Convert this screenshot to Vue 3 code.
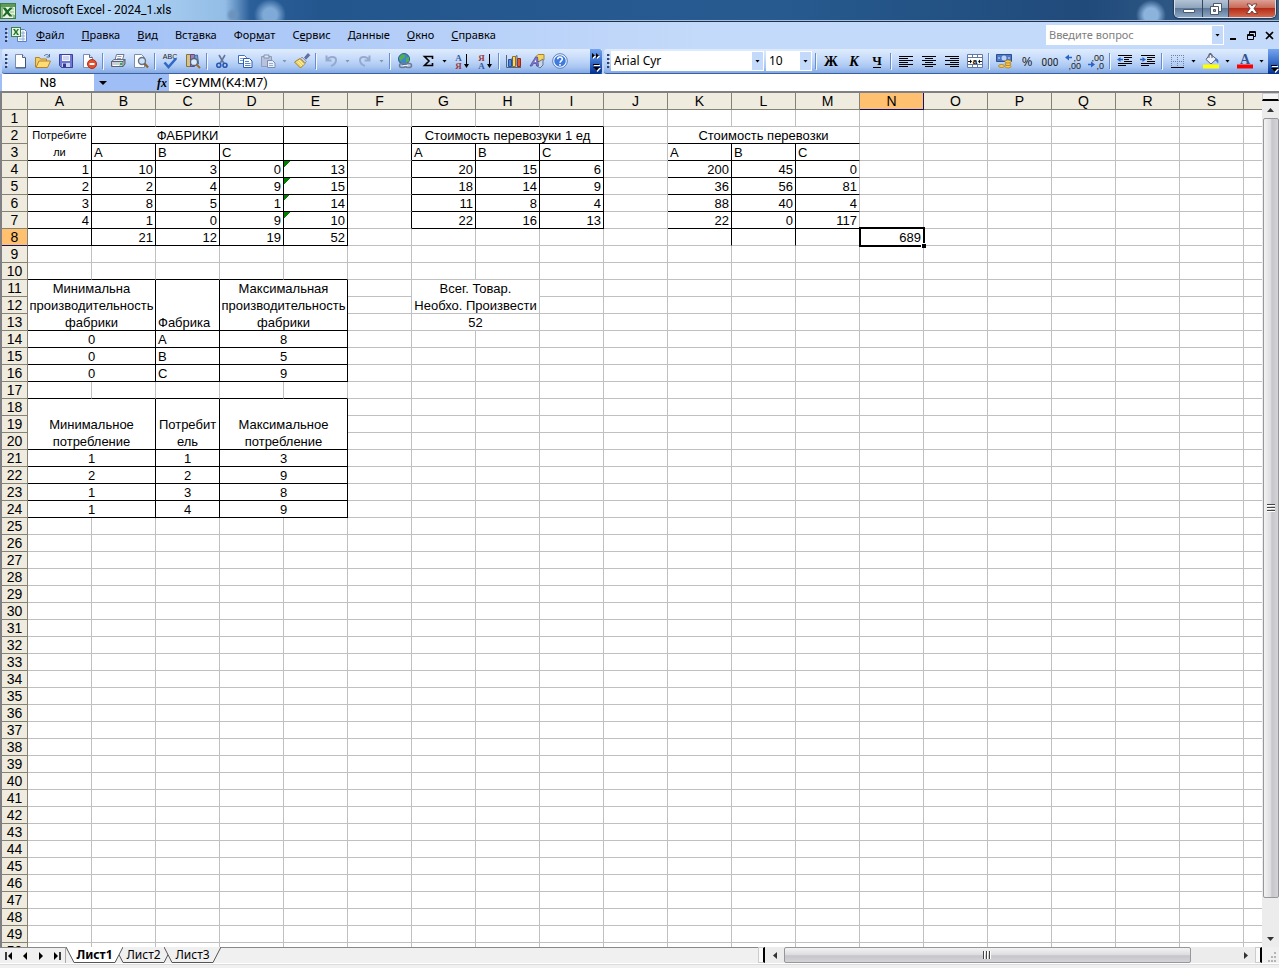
<script setup>
import { ref } from 'vue'

const menus = [
  ['', 'Ф', 'айл'], ['', 'П', 'равка'], ['', 'В', 'ид'], ['Вст', 'а', 'вка'], ['Фор', 'м', 'ат'],
  ['С', 'е', 'рвис'], ['', 'Д', 'анные'], ['', 'О', 'кно'], ['', 'С', 'правка'],
]

const icons = {
  excel: '<rect x=".5" y=".5" width="15" height="15" fill="#e8f3e4" stroke="#3f7d42"/><path d="M1 1h14v3H1z" fill="#5d9c58"/><path d="M1 4h2v11H1zM13 12h2v3h-2z" fill="#8dbb87"/><path d="M10 6h4M10 9h4M10 12h4" stroke="#8dbb87"/><path d="M2.500 4.500h3l2 2.500 2.500-2.500h3L8.700 9l3.800 4.500H9.500L7 10.800 4.500 13.500h-2.500L5.700 9z" fill="#1b6b26"/>',
  book: '<path d="M6.500 2.500h7l2 2v10h-9z" fill="#f5f8ff" stroke="#5e7fbd"/><path d="M8 6h6M8 9h6M8 12h6M12 4v10" stroke="#93acd8"/><rect x=".5" y=".5" width="9" height="9" fill="#e7f4e2" stroke="#3d853f"/><path d="M2 2h2l1 2 1.500-2H8L6 5l2 3H6L5 6 3.500 8H2l2-3z" fill="#1f7a2b"/>',
  blank: '<path d="M3.500 1.500h7l3 3v10h-10z" fill="#fff" stroke="#7b8eb0"/><path d="M10.500 1.500v3h3" fill="#dbe4f5" stroke="#52678f"/><path d="M13.500 5v10h-10" fill="none" stroke="#3c5078"/>',
  open: '<path d="M9 3c2-2 4-2 5 0m.500-2v3h-3" fill="none" stroke="#4a6a94"/><path d="M.500 14V4.500h4l1 1.500h6v2" fill="#f4cf65" stroke="#b5832a"/><path d="M1 14.500 4 8h11.500l-3 6.500z" fill="#ffdb78" stroke="#b5832a"/>',
  save: '<path d="M1.500 1.500h13v13h-11l-2-2z" fill="#6c78d2" stroke="#3b419a"/><path d="M4 2h8v6H4z" fill="#f2f4ff"/><path d="M5 4h6M5 6h6" stroke="#aab3dd"/><path d="M4 10h8v4H4z" fill="#cbd0ee"/><path d="M5 10.500h3V14H5z" fill="#32388c"/>',
  perm: '<path d="M2.500 1.500h6l3 3v10h-9z" fill="#fff" stroke="#7b8eb0"/><path d="M8.500 1.500v3h3" fill="#dbe4f5" stroke="#52678f"/><circle cx="11" cy="11" r="4.500" fill="#e2512f" stroke="#b62f16"/><path d="M8.500 10h5v2h-5z" fill="#fff"/>',
  print: '<path d="M5 7 6.500 1.500H14L12.500 7z" fill="#fff" stroke="#6b7890"/><path d="M7.500 3.500h4M7 5.500h4" stroke="#8fa0c0"/><path d="M1.500 8.500 4 6.500h11l-2 2z" fill="#e2e6ee" stroke="#697282"/><path d="M1.500 8.500H13v5H1.500z" fill="#c9cfda" stroke="#5b6372"/><path d="m13 8.500 2-2v4.500l-2 2.500" fill="#98a1b0" stroke="#5b6372"/><path d="M10 10h2v2h-2z" fill="#18c132"/><path d="M3 12.500h6" stroke="#fff"/>',
  preview: '<path d="M1.500 1.500h7l3 3v10h-10z" fill="#fff" stroke="#7b8eb0"/><circle cx="9" cy="8" r="3.500" fill="#cce4fa" stroke="#667287" stroke-width="1.400"/><path d="m11.500 10.500 3.500 4" stroke="#8a6434" stroke-width="2.200"/>',
  spell: '<text x="8" y="5.500" text-anchor="middle" font-family="Liberation Sans" font-size="7" fill="#222">ABC</text><path d="m2.500 9.500 4 4.500L14 5.500" fill="none" stroke="#3169c6" stroke-width="2.600"/>',
  research: '<path d="M1.500 1.500h4v12h-4z" fill="#d3c48f" stroke="#8a7435"/><path d="M5.500 1.500h4v12h-4z" fill="#9d7eb5" stroke="#644a7d"/><path d="m9.500 2.500 3-.500 1 9-3 .500z" fill="#6f9fd6" stroke="#456a9e"/><circle cx="9" cy="9" r="3.500" fill="#d9ecff" stroke="#5a6578" stroke-width="1.300"/><path d="m11.500 11.500 3.500 3.500" stroke="#9b6d31" stroke-width="2"/>',
  cut: '<path d="m5 2 5 8.500M11 2 6 10.500" stroke="#64779a" stroke-width="1.600"/><circle cx="4.800" cy="12.300" r="2" fill="none" stroke="#2858b5" stroke-width="1.600"/><circle cx="11" cy="12.300" r="2" fill="none" stroke="#2858b5" stroke-width="1.600"/>',
  copy: '<path d="M1.500 2.500h6l2 2v6h-8z" fill="#fff" stroke="#3f6fc0"/><path d="M3 5.500h5M3 7.500h5" stroke="#7ca0df"/><path d="M6.500 5.500h6l2.500 2.500v6.500H6.500z" fill="#fff" stroke="#2d5cae"/><path d="M8 8.500h4M8 10.500h5.500M8 12.500h5.500" stroke="#5585d2"/>',
  paste: '<path d="M1.500 3.500h10v10h-10z" fill="#b7c3dc" stroke="#8d9cba"/><path d="M4 2h5v3H4z" fill="#dfe6f3" stroke="#8492ad"/><path d="M7.500 7.500h5l2.500 2.500v4.500H7.500z" fill="#e9effa" stroke="#7d8eb0"/><path d="M9 10.500h4M9 12.500h4" stroke="#9daccd"/>',
  painter: '<path d="m10.500 4.500 3.500-4 1.800 1.800-3.800 4z" fill="#6171a7" stroke="#3b4b7c" stroke-width=".6"/><path d="m8 4 4.500 4.500-1.500 1.500L6.500 5.500z" fill="#c7cedc" stroke="#6f7688" stroke-width=".6"/><path d="m6 5.500 5 5-4.500 4.500L.500 9z" fill="#f0d769" stroke="#a58131"/><path d="m3.500 8.500 4.500 4.500M5 7l4.500 4.500" stroke="#fff3ab"/>',
  undo: '<path d="M3.500 2.500v5h5M4 7c2-4 9-4 9 0 0 3-2 5-5 6" fill="none" stroke="#96a9cf" stroke-width="2"/>',
  redo: '<path d="M12.500 2.500v5h-5M12 7c-2-4-9-4-9 0 0 3 2 5 5 6" fill="none" stroke="#96a9cf" stroke-width="2"/>',
  link: '<circle cx="7" cy="6" r="5.500" fill="#3e84d0" stroke="#2b5c90"/><path d="M4 2c3-2 5 0 4 2s-3 1-3 3-3 0-3-2zM9 5l3-1v4l-3 2z" fill="#50b04b"/><rect x="2.500" y="10.500" width="6" height="4" rx="2" fill="none" stroke="#707b8e" stroke-width="1.500"/><rect x="8.500" y="10.500" width="6" height="4" rx="2" fill="none" stroke="#707b8e" stroke-width="1.500"/><path d="M6 12.500h5" stroke="#eef"/>',
  sum: '<path d="M12.500 6V3.500H4.500L9 8l-4.500 4.500h8V10" fill="none" stroke="#000" stroke-width="1.600"/>',
  sortUp: '<text x="4.500" y="7.500" text-anchor="middle" font-family="Liberation Serif" font-size="9" font-weight="bold" fill="#315a9e">А</text><text x="4.500" y="15.500" text-anchor="middle" font-family="Liberation Serif" font-size="9" font-weight="bold" fill="#9e3b3b">Я</text><path d="M12.500 1v12" stroke="#000"/><path d="M10 11h5l-2.500 4z"/>',
  sortDown: '<text x="4.500" y="7.500" text-anchor="middle" font-family="Liberation Serif" font-size="9" font-weight="bold" fill="#9e3b3b">Я</text><text x="4.500" y="15.500" text-anchor="middle" font-family="Liberation Serif" font-size="9" font-weight="bold" fill="#315a9e">А</text><path d="M12.500 1v12" stroke="#000"/><path d="M10 11h5l-2.500 4z"/>',
  chart: '<path d="M.500 2v12.500H15" fill="none" stroke="#54637e"/><path d="M2.500 6.500h3v7h-3z" fill="#4b86df" stroke="#23519b"/><path d="M6.500 3.500h3v10h-3z" fill="#ffd75c" stroke="#9a7410"/><path d="M11.500 5.500h3v8h-3z" fill="#e2542f" stroke="#94290d"/><path d="m5.500 6.500 1-2v9m3-10 1.500-1v10" fill="none" stroke="#58627a"/>',
  draw: '<path d="M7 3.500 9 1.500h6v5l-2 2H7z" fill="#f3d362" stroke="#a98431"/><path d="m11 8 3-2v6l-3 3-3-2v-4z" fill="#c8d4e8" stroke="#64748f"/><path d="M1 13 6.500 4h2l1 9h-2l-.3-2.500H4.500L3 13z" fill="#7e78cb" stroke="#4a4590" stroke-width=".7"/><path d="m5.500 9 1.300-2.500.2 2.500z" fill="#fff"/>',
  help: '<circle cx="8" cy="8" r="6.500" fill="#3d7be0" stroke="#f3f8ff" stroke-width="1.500"/><circle cx="8" cy="8" r="7.300" fill="none" stroke="#3d66ac" stroke-width=".8"/><path d="M5.700 6.300c0-3 4.600-3 4.600 0 0 1.500-2.300 1.700-2.300 3.400M8 11v1.800" fill="none" stroke="#fff" stroke-width="1.600"/>',
  bold: '<text x="8" y="13" text-anchor="middle" font-family="Liberation Serif" font-size="14" font-weight="bold">Ж</text>',
  italic: '<text x="8" y="13" text-anchor="middle" font-family="Liberation Serif" font-size="14" font-weight="bold" font-style="italic">К</text>',
  under: '<text x="8" y="12" text-anchor="middle" font-family="Liberation Serif" font-size="13" font-weight="bold">Ч</text><path d="M4 14.500h8" stroke="#000"/>',
  left: '<path d="M1 3.500h14M1 5.500h9M1 7.500h14M1 9.500h9M1 11.500h14M1 13.500h9" stroke="#000"/>',
  center: '<path d="M1 3.500h14M4 5.500h8M1 7.500h14M4 9.500h8M1 11.500h14M4 13.500h8" stroke="#000"/>',
  right: '<path d="M1 3.500h14M6 5.500h9M1 7.500h14M6 9.500h9M1 11.500h14M6 13.500h9" stroke="#000"/>',
  merge: '<path d="M.500 1.500h15v13H.500zM.500 4.500h15M.500 11.500h15M5.500 1.500v3m5-3v3m-5 7v3m5-3v3" fill="#fff" stroke="#6379a2"/><path d="M1 5h14v6H1z" fill="#fff"/><path d="M1 8.500h3M12 8.500h3" stroke="#222"/><path d="m3 6.500 2 2-2 2zM13 6.500l-2 2 2 2z"/><text x="8" y="11" text-anchor="middle" font-family="Liberation Sans" font-size="8" font-weight="bold">a</text>',
  money: '<path d="M.500 1.500h15v7H.500z" fill="#4c78c5" stroke="#2b4f92"/><circle cx="8" cy="5" r="2.500" fill="#bcd2f4"/><path d="M2 5h2m8 0h2" stroke="#d8e5fa"/><g fill="#f8c952" stroke="#a5741a" stroke-width=".7"><ellipse cx="12" cy="13.500" rx="3" ry="1.500"/><ellipse cx="12" cy="11" rx="3" ry="1.500"/><ellipse cx="12" cy="8.500" rx="3" ry="1.500"/><ellipse cx="5.500" cy="13" rx="3" ry="1.500"/></g>',
  percent: '<text x="8" y="13" text-anchor="middle" font-family="Open Sans" font-size="13" fill="#222">%</text>',
  zeros: '<text x="8" y="13" text-anchor="middle" font-family="Roboto" font-size="10" fill="#222">000</text>',
  decMore: '<path d="M7 4.500H2" stroke="#2965c7" stroke-width="1.500"/><path d="M4 1.500v6l-4-3z" fill="#2965c7"/><text x="16" y="8" text-anchor="end" font-family="Liberation Sans" font-size="9" fill="#222">,0</text><text x="16" y="15.500" text-anchor="end" font-family="Liberation Sans" font-size="9" fill="#222">,00</text>',
  decLess: '<path d="M0 11.500h5" stroke="#2965c7" stroke-width="1.500"/><path d="M3 8.500v6l4-3z" fill="#2965c7"/><text x="16" y="8" text-anchor="end" font-family="Liberation Sans" font-size="9" fill="#222">,00</text><text x="16" y="15.500" text-anchor="end" font-family="Liberation Sans" font-size="9" fill="#222">,0</text>',
  outdent: '<path d="M1 2.500h14M7 4.500h8M7 6.500h5M7 8.500h8M1 10.500h14M1 12.500h8" stroke="#000"/><path d="M6 6.500H2" stroke="#2965c7" stroke-width="1.500"/><path d="M3.500 4v5L0 6.500z" fill="#2965c7"/>',
  indent: '<path d="M1 2.500h14M7 4.500h8M7 6.500h5M7 8.500h8M1 10.500h14M1 12.500h8" stroke="#000"/><path d="M0 6.500h4" stroke="#2965c7" stroke-width="1.500"/><path d="M2.500 4v5L6 6.500z" fill="#2965c7"/>',
  border: '<path d="M2 2.500h13M2 8.500h13M2.500 2v12M8.500 2v12M14.500 2v12" stroke="#6f82a6" stroke-dasharray="1 1"/><path d="M2 14.500h13" stroke="#000"/>',
  fill: '<path d="m7 1 6.500 5-5.500 5-5-4.500z" fill="#eef2f8" stroke="#535f75"/><path d="M6 5V1.500C6 0 9 0 9 2v3" fill="none" stroke="#535f75"/><path d="M12.500 5.500c4 .500 3 4 2.500 5-1-1-1.500-3-3.500-3z" fill="#4479cc"/><path d="M0 11.500h16v4H0z" fill="#ff0"/>',
  fontColor: '<text x="8" y="11" text-anchor="middle" font-family="Liberation Serif" font-size="14" font-weight="bold" fill="#35548e">А</text><path d="M0 11.500h16v4H0z" fill="red"/>',
}

const standardBar = [
  ['blank', 'Создать'], ['open', 'Открыть'], ['save', 'Сохранить'], ['perm', 'Разрешения'], '|',
  ['print', 'Печать'], ['preview', 'Просмотр'], '|', ['spell', 'Орфография'], ['research', 'Справочные материалы'], '|',
  ['cut', 'Вырезать'], ['copy', 'Копировать'], ['paste', 'Вставить'], 'off', ['painter', 'Формат по образцу'], '|',
  ['undo', 'Отменить'], 'off', ['redo', 'Вернуть'], 'off', '|', ['link', 'Гиперссылка'], ['sum', 'Автосумма'], 'v',
  ['sortUp', 'По возрастанию'], ['sortDown', 'По убыванию'], '|', ['chart', 'Диаграмма'], ['draw', 'Рисование'], ['help', 'Справка'],
]
const formatBar = [
  '|', ['bold', 'Полужирный'], ['italic', 'Курсив'], ['under', 'Подчеркнутый'], '|',
  ['left', 'По левому краю'], ['center', 'По центру'], ['right', 'По правому краю'], ['merge', 'Объединить'], '|',
  ['money', 'Денежный формат'], ['percent', 'Процентный формат'], ['zeros', 'Разделители'], ['decMore', 'Увеличить разрядность'], ['decLess', 'Уменьшить разрядность'], '|',
  ['outdent', 'Уменьшить отступ'], ['indent', 'Увеличить отступ'], '|',
  ['border', 'Границы'], 'v', ['fill', 'Цвет заливки'], 'v', ['fontColor', 'Цвет шрифта'], 'v',
]

// The last column has no letter: only its left part fits in the pane.
const columns = [...'ABCDEFGHIJKLMNOPQRS', '']
const rowCount = 50
const cells = {}
const put = (ref, text, opts = {}) => { cells[ref] = { text, ...opts } }
const putRow = (col, row, values, opts = {}) => {
  const start = columns.indexOf(col)
  values.forEach((v, i) => put(columns[start + i] + row, v, { align: typeof v === 'number' ? 'right' : 'left', ...opts }))
}

put('A2', 'Потребите\nли', { rows: 2, align: 'center', small: true })
put('B2', 'ФАБРИКИ', { cols: 3, align: 'center' })
putRow('B', 3, ['A', 'B', 'C'])
putRow('A', 4, [1, 10, 3, 0, 13])
putRow('A', 5, [2, 2, 4, 9, 15])
putRow('A', 6, [3, 8, 5, 1, 14])
putRow('A', 7, [4, 1, 0, 9, 10])
putRow('B', 8, [21, 12, 19, 52])
for (const r of [4, 5, 6, 7]) cells['E' + r].flag = true

put('G2', 'Стоимость перевозуки 1 ед', { cols: 3, align: 'center' })
putRow('G', 3, ['A', 'B', 'C'])
putRow('G', 4, [20, 15, 6])
putRow('G', 5, [18, 14, 9])
putRow('G', 6, [11, 8, 4])
putRow('G', 7, [22, 16, 13])

put('K2', 'Стоимость перевозки', { cols: 3, align: 'center' })
putRow('K', 3, ['A', 'B', 'C'])
putRow('K', 4, [200, 45, 0])
putRow('K', 5, [36, 56, 81])
putRow('K', 6, [88, 40, 4])
putRow('K', 7, [22, 0, 117])
put('N8', 689, { align: 'right', active: true })

put('G11', 'Всег. Товар.\nНеобхо. Произвести', { cols: 2, rows: 2, align: 'center' })
put('G13', 52, { cols: 2, align: 'center' })

const wide = { cols: 2, align: 'center' }
put('A11', 'Минимальна\nпроизводительность\nфабрики', { ...wide, rows: 3 })
put('C11', 'Фабрика', { rows: 3, align: 'left' })
put('D11', 'Максимальная\nпроизводительность\nфабрики', { ...wide, rows: 3 })
;[[14, 0, 'A', 8], [15, 0, 'B', 5], [16, 0, 'C', 9]].forEach(([r, a, c, d]) => {
  put('A' + r, a, wide); put('C' + r, c, { align: 'left' }); put('D' + r, d, wide)
})
put('A18', 'Минимальное\nпотребление', { ...wide, rows: 3 })
put('C18', 'Потребит\nель', { rows: 3, align: 'center' })
put('D18', 'Максимальное\nпотребление', { ...wide, rows: 3 })
;[[21, 1, 1, 3], [22, 2, 2, 9], [23, 1, 3, 8], [24, 1, 4, 9]].forEach(([r, a, c, d]) => {
  put('A' + r, a, wide); put('C' + r, c, { align: 'center' }); put('D' + r, d, wide)
})

// Black rules: [columns, first row, last row]
const bottomRules = [['ABCDEGHI', 1, 1], ['BCDEGHIKLM', 2, 2], ['ABCDEGHIKLM', 3, 7], ['ABCDE', 8, 8],
  ['ABCDE', 10, 10], ['ABCDE', 13, 17], ['ABCDE', 20, 24]]
const rightRules = [['ADE', 2, 8], ['BC', 3, 8], ['FI', 2, 7], ['GH', 3, 7], ['KL', 3, 8], ['BCE', 11, 16], ['BCE', 18, 24]]
const ruled = (rules, col, row) => col !== '' && rules.some(([c, a, b]) => c.includes(col) && row >= a && row <= b)

const covered = new Set()
const grid = []
for (let r = 1; r <= rowCount; r++) {
  const line = []
  columns.forEach((col, c) => {
    if (covered.has(col + r)) return
    const cell = cells[col + r] || { text: '' }
    const cols = cell.cols || 1
    const rows = cell.rows || 1
    for (let y = 0; y < rows; y++) for (let x = 0; x < cols; x++) covered.add(columns[c + x] + (r + y))
    line.push({
      ...cell, cols, rows, key: col + r,
      classes: [cell.align, {
        small: cell.small, flag: cell.flag, active: cell.active,
        'line-b': ruled(bottomRules, col, r + rows - 1),
        'line-r': ruled(rightRules, columns[c + cols - 1], r),
      }],
    })
  })
  grid.push(line)
}

const tabs = ['Лист1', 'Лист2', 'Лист3']
const activeTab = ref('Лист1')
const nameBox = ref('N8')
const formula = ref('=СУММ(K4:M7)')
const question = ref('')
</script>

<template>
  <div class="window">
    <header class="title">
      <svg class="ico" viewBox="0 0 16 16" v-html="icons.excel"></svg>
      <h1>Microsoft Excel - 2024_1.xls</h1>
      <div class="caption">
        <button aria-label="Свернуть"><svg width="14" height="12" viewBox="0 0 14 12"><path d="M1.500 6.500h11v3h-11z" fill="#fff" stroke="#4b5a6c" /></svg></button>
        <button aria-label="Восстановить"><svg width="14" height="12" viewBox="0 0 14 12"><path d="M4.500.500h8v8h-8z" fill="#fff" stroke="#4b5a6c" /><path d="M1.500 3.500h8v8h-8z" fill="#fff" stroke="#4b5a6c" /><path d="M4.500 6.500h2v2h-2z" fill="#8fa4bb" stroke="#4b5a6c" /></svg></button>
        <button class="close" aria-label="Закрыть"><svg width="14" height="12" viewBox="0 0 14 12"><path d="M2 1h3.500L7 3l1.500-2H12L9 5.500l3.500 5H9L7 8l-2 2.500H1.500L5 5.500z" fill="#fff" stroke="#5e2c2c" stroke-width=".8" /></svg></button>
      </div>
    </header>

    <nav class="menu">
      <i class="grip"></i>
      <svg class="ico" viewBox="0 0 16 16" v-html="icons.book"></svg>
      <button v-for="(m, i) in menus" :key="i">{{ m[0] }}<u>{{ m[1] }}</u>{{ m[2] }}</button>
      <div class="ask">
        <input v-model="question" aria-label="Введите вопрос" placeholder="Введите вопрос">
        <button class="drop" aria-label="Список вопросов"><i class="tri"></i></button>
      </div>
      <div class="doc-buttons">
        <button aria-label="Свернуть книгу"><svg width="9" height="9" viewBox="0 0 9 9"><path d="M1 7h6v2H1z" /></svg></button>
        <button aria-label="Восстановить книгу"><svg width="9" height="9" viewBox="0 0 9 9"><path d="M2.500 5V.500h6v5H7M2 1.500h7M.500 3.500h6v5h-6zM0 4.500h7" fill="none" stroke="#000" /></svg></button>
        <button aria-label="Закрыть книгу"><svg width="9" height="9" viewBox="0 0 9 9"><path d="m1 1 7 7M8 1 1 8" stroke="#000" stroke-width="1.700" /></svg></button>
      </div>
    </nav>

    <div class="bars">
      <div class="bar">
        <i class="grip"></i>
        <template v-for="(b, i) in standardBar" :key="i">
          <i v-if="b === '|'" class="sep"></i>
          <button v-else-if="b === 'v' || b === 'off'" class="more" :class="b" aria-label="Список"><i class="tri"></i></button>
          <button v-else class="tool" :aria-label="b[1]"><svg class="ico" viewBox="0 0 16 16" v-html="icons[b[0]]"></svg></button>
        </template>
        <button class="chevron first" aria-label="Параметры панели">
          <svg width="11" height="25" viewBox="0 0 11 25"><path d="m2 5 3 2.500L2 10zM6 5l3 2.500L6 10z" fill="#fff" /><path d="m1 4 3 2.500L1 9zM5 4l3 2.500L5 9z" /><path d="M3 16.500h6" stroke="#fff" /><path d="M3 19h7l-3.500 4z" fill="#fff" /><path d="M2 15.500h6" stroke="#000" /><path d="M2 18h7l-3.500 4z" /></svg>
        </button>
      </div>
      <div class="bar grow">
        <i class="grip"></i>
        <span class="combo font"><select aria-label="Шрифт"><option>Arial Cyr</option></select><b class="drop"><i class="tri"></i></b></span>
        <span class="combo size"><select aria-label="Размер"><option>10</option></select><b class="drop"><i class="tri"></i></b></span>
        <template v-for="(b, i) in formatBar" :key="i">
          <i v-if="b === '|'" class="sep"></i>
          <button v-else-if="b === 'v'" class="more" aria-label="Список"><i class="tri"></i></button>
          <button v-else class="tool" :aria-label="b[1]"><svg class="ico" viewBox="0 0 16 16" v-html="icons[b[0]]"></svg></button>
        </template>
        <button class="chevron last" aria-label="Параметры панели">
          <svg width="11" height="25" viewBox="0 0 11 25"><path d="M4 17.500h6" stroke="#fff" /><path d="M4 20h7l-3.500 4z" fill="#fff" /><path d="M3 16.500h6" stroke="#000" /><path d="M3 19h7l-3.500 4z" /></svg>
        </button>
      </div>
    </div>

    <div class="formula">
      <input v-model="nameBox" class="name" aria-label="Имя">
      <button class="name-drop" aria-label="Список имен"><svg width="8" height="4" viewBox="0 0 8 4"><path d="M0 0h8L4 4z" /></svg></button>
      <button class="fx" aria-label="Вставка функции">fx</button>
      <input v-model="formula" class="expr" aria-label="Строка формул">
    </div>

    <main class="work">
      <div class="sheet">
        <table>
          <colgroup><col class="c-head"><col v-for="c in columns" :key="c" class="c-cell"></colgroup>
          <thead>
            <tr><th></th><th v-for="c in columns" :key="c" scope="col" :class="{ on: c === 'N' }">{{ c }}</th></tr>
          </thead>
          <tbody>
            <tr v-for="(line, r) in grid" :key="r">
              <th scope="row" :class="{ on: r === 7 }">{{ r + 1 }}</th>
              <td v-for="c in line" :key="c.key" :colspan="c.cols" :rowspan="c.rows" :class="c.classes"><div>{{ c.text }}</div></td>
            </tr>
          </tbody>
        </table>
      </div>
      <div class="vscroll">
        <i class="split-h"></i>
        <button aria-label="Вверх"><svg width="7" height="4" viewBox="0 0 7 4"><path d="M0 4h7L3.500 0z" fill="#333" /></svg></button>
        <div class="track"><div class="thumb"><svg width="8" height="8" viewBox="0 0 8 8"><path d="M0 .500h8M0 3.500h8M0 6.500h8" stroke="#444" /><path d="M0 1.500h8M0 4.500h8M0 7.500h8" stroke="#fff" /></svg></div></div>
        <button aria-label="Вниз"><svg width="7" height="4" viewBox="0 0 7 4"><path d="M0 0h7L3.500 4z" fill="#333" /></svg></button>
      </div>
    </main>

    <footer class="bottom">
      <div class="tab-nav">
        <button aria-label="Первый лист"><svg width="8" height="8" viewBox="0 0 8 8"><path d="M1 0v8" stroke="#000" stroke-width="1.500" /><path d="M7 0v8L3 4z" /></svg></button>
        <button aria-label="Предыдущий лист"><svg width="8" height="8" viewBox="0 0 8 8"><path d="M6 0v8L2 4z" /></svg></button>
        <button aria-label="Следующий лист"><svg width="8" height="8" viewBox="0 0 8 8"><path d="M2 0v8l4-4z" /></svg></button>
        <button aria-label="Последний лист"><svg width="8" height="8" viewBox="0 0 8 8"><path d="M7 0v8" stroke="#000" stroke-width="1.500" /><path d="M1 0v8l4-4z" /></svg></button>
      </div>
      <div class="tabs">
        <button v-for="t in tabs" :key="t" :class="{ current: t === activeTab }" @click="activeTab = t">
          <svg viewBox="0 0 57 16" preserveAspectRatio="none"><path d="M0 0l8 15.500h41L57 0" stroke="#555" vector-effect="non-scaling-stroke" /></svg>
          <span>{{ t }}</span>
        </button>
      </div>
      <i class="split-v"></i>
      <div class="hscroll">
        <button aria-label="Влево"><svg width="4" height="7" viewBox="0 0 4 7"><path d="M4 0v7L0 3.500z" fill="#333" /></svg></button>
        <div class="track"><div class="thumb"><svg width="8" height="8" viewBox="0 0 8 8"><path d="M.500 0v8M3.500 0v8M6.500 0v8" stroke="#444" /><path d="M1.500 0v8M4.500 0v8M7.500 0v8" stroke="#fff" /></svg></div></div>
        <button aria-label="Вправо"><svg width="4" height="7" viewBox="0 0 4 7"><path d="M0 0v7l4-3.500z" fill="#333" /></svg></button>
      </div>
      <i class="split-v"></i>
      <svg class="resize" width="17" height="16" viewBox="0 0 17 16"><path d="M12 5h2v2h-2zM9 9h2v2H9zM12 9h2v2h-2zM6 13h2v2H6zM9 13h2v2H9zM12 13h2v2h-2z" fill="#b5b5b5" /></svg>
    </footer>
    <div class="status"></div>
  </div>
</template>

<style>
body { margin: 0; overflow: hidden; }
</style>

<style scoped>
.window { display: flex; flex-direction: column; height: 100vh; font: 12px/16px "Noto Sans", "Open Sans", sans-serif; color: #000; background: #f0f0f0; overflow: hidden; }
button { border: 0; padding: 0; margin: 0; background: none; font: inherit; color: inherit; display: flex; align-items: center; justify-content: center; flex: none; }
input, select { border: 0; margin: 0; padding: 0; background: #fff; font: inherit; color: inherit; outline: 0; border-radius: 0; min-width: 0; box-sizing: border-box; }
svg { flex: none; display: block; }
.ico { width: 16px; height: 16px; overflow: visible; }
.tri { width: 5px; height: 3px; background: #000; clip-path: polygon(0 0, 100% 0, 50% 100%); }

.title { display: flex; align-items: center; height: 20px; flex: none; gap: 6px; border-bottom: 1px solid #a8bdd6; box-shadow: 0 1px #1c3050; position: relative; margin-bottom: 1px;
  background: radial-gradient(circle at 270px 15px, #7fa9d6 0 7px, transparent 16px), radial-gradient(circle at 1151px 15px, #8cb3dc 0 7px, transparent 15px), radial-gradient(circle at 233px 15px, #6c93bd 0 3px, transparent 7px), linear-gradient(90deg, #a3c8ee 0, #b4d6f6 110px, #93bde6 225px, #2b5f99 250px, #24568e 320px, #275b90 60%, #204a7a 85%, #3f6792 100%); }
.title .ico { margin-top: 1px; }
.title h1 { margin: 0; font: 12px/20px Roboto, "Noto Sans", sans-serif; white-space: nowrap; }
.caption { display: flex; margin-left: auto; margin-right: 3px; align-self: flex-start; border: 1px solid #d4e0ee; border-top: 0; border-radius: 0 0 5px 5px; overflow: hidden; box-shadow: 0 0 1px 1px #26384f; }
.caption button { width: 28px; height: 17px; background: linear-gradient(#b3c3d5, #8fa5bd 45%, #5e7898 50%, #8ba6c3); border-right: 1px solid #34465e; }
.caption button + button { width: 26px; }
.caption button.close { width: 46px; background: linear-gradient(#dba196, #ca6a58 45%, #b32d18 50%, #d4674a); border: 0; }

.menu { display: flex; align-items: center; height: 26px; padding-bottom: 1px; flex: none; padding-left: 5px; background: linear-gradient(90deg, #9ebef5, #c4dafa 55%); font-size: 11px; }
.menu .ico { margin: 0 9px 0 3px; }
.menu > button { padding: 0 8px; margin-right: 1px; display: block; white-space: pre; }
.menu > .ico + button { padding-left: 0; }
.grip { width: 3px; height: 14px; flex: none; background: repeating-linear-gradient(#27417a 0 2px, transparent 2px 4px); border-right: 1px solid #fff8; box-sizing: border-box; }
.ask { display: flex; width: 178px; height: 20px; margin-left: auto; background: #fff; padding: 1px; box-sizing: border-box; }
.ask input { flex: 1; padding-left: 2px; }
.ask input::placeholder { color: #808080; opacity: 1; }
.drop { width: 11px; background: #c4dafa; display: flex; align-items: center; justify-content: center; }
.doc-buttons { display: flex; gap: 9px; margin: 0 5px 0 5px; }

.bars { display: flex; gap: 2px; height: 25px; flex: none; background: #bed4f8; padding-left: 2px; }
.bar { display: flex; align-items: center; background: linear-gradient(#dfecfd, #c6dbfa 40%, #a9c6f2 75%, #83a9e4); border-bottom: 1px solid #3b619c; border-radius: 3px 0 0 3px; padding-left: 3px; box-sizing: border-box; height: 25px; }
.bar.grow { flex: 1; min-width: 0; }
.tool { width: 23px; height: 23px; }
.more { width: 11px; height: 23px; }
.off .tri { background: #8895ae; }
.sep { width: 1px; height: 16px; margin: 0 3px 0 2px; background: #6a8ccb; box-shadow: 1px 1px #f1f9ff; flex: none; }
.chevron { width: 12px; height: 25px; align-self: flex-start; background: linear-gradient(#75a5f0, #3b6fc9 50%, #00308f); border-radius: 0 3px 3px 0; }
.first { margin-left: 19px; }
.last { margin-left: auto; width: 11px; border-radius: 0; }
.combo { display: flex; background: #fff; height: 20px; padding: 1px; box-sizing: border-box; margin-right: 2px; flex: none; }
.grip + .combo { margin-left: 1px; }
.combo select { appearance: none; flex: 1; padding-left: 2px; }
.combo.font { width: 153px; }
.combo.size { width: 46px; margin-right: 1px; }

.formula { display: flex; align-items: center; height: 17px; flex: none; background: #9ebef5; }
.formula input { height: 17px; font-family: Roboto, "Liberation Sans", sans-serif; font-size: 13px; }
.name { width: 92px; margin-left: 2px; text-align: center; }
.name-drop { width: 18px; }
.fx { width: 57px; padding-right: 2px; justify-content: flex-end; font: italic bold 12px/16px "Liberation Serif", serif; }
.expr { flex: 1; padding-left: 6px; }

.work { flex: 1; min-height: 0; display: flex; border-top: 2px solid #808084; }
.sheet { flex: 1; min-width: 0; overflow: hidden; border-left: 2px solid #808084; background: #fff; }
table { border-collapse: separate; border-spacing: 0; table-layout: fixed; width: 1306px; font: 13px/17px "Liberation Sans", Arial, sans-serif; }
.c-head { width: 26px; }
.c-cell { width: 64px; }
tr { height: 17px; }
th, td { box-sizing: border-box; height: 17px; padding: 0; border-right: 1px solid #c0c0c0; border-bottom: 1px solid #c0c0c0; white-space: pre; vertical-align: bottom; }
th { background: #efebde; border-color: #848273; font-weight: 400; font-size: 14px; line-height: 16px; text-align: center; }
th.on { background: #ffc06f; border-color: #10107a; }
tbody th.on { border-right-color: #848273; }
td { padding: 0 2px; }
td div { margin-bottom: -1px; line-height: 17px; }
.left { text-align: left; }
.right { text-align: right; }
.center { text-align: center; padding: 0; }
.small { font-size: 11px; }
.line-b { border-bottom-color: #000; }
.line-r { border-right-color: #000; }
.flag { background: linear-gradient(135deg, #008000 50%, transparent 50%) 0 0 / 6px 6px no-repeat; }
.active { position: relative; }
.active::before { content: ""; position: absolute; inset: -2px -2px -2px -1px; border: 2px solid #000; }
.active::after { content: ""; position: absolute; right: -3px; bottom: -3px; width: 4px; height: 4px; background: #000; border: solid #fff; border-width: 1px 0 0 1px; }

.vscroll { width: 17px; flex: none; display: flex; flex-direction: column; background: #ececec; }
.vscroll button { height: 17px; width: 100%; }
.split-h { height: 5px; border: 1px solid #ccc; border-bottom: 2px solid #000; background: #f4f4f4; }
.track { flex: 1; display: flex; min-width: 0; min-height: 0; }
.thumb { display: flex; align-items: center; justify-content: center; border: 1px solid #97979b; border-radius: 2px; box-sizing: border-box; }
.vscroll .track { margin-left: 1px; }
.vscroll .thumb { width: 100%; height: 96%; background: linear-gradient(90deg, #f3f3f3, #dcdce0 50%, #c6c6ca 55%, #d4d4d8); }

.bottom { display: flex; height: 16px; flex: none; background: #f0f0f0; border-bottom: 1px solid #fff; }
.tab-nav { display: flex; padding-left: 1px; border-top: 1px solid #888; }
.tab-nav button { width: 16px; height: 15px; }
.tabs { display: flex; flex: 1; border-top: 1px solid #888; border-left: 1px solid #aaa; min-width: 0; }
.tabs button { position: relative; height: 16px; width: 57px; margin: -1px -8px 0 0; }
.tabs button svg { position: absolute; inset: 0; width: 100%; height: 100%; fill: #f0f0f0; }
.tabs button span { position: relative; }
.tabs .current { z-index: 1; font-weight: 700; }
.tabs .current svg { fill: #fff; }
.split-v { width: 7px; flex: none; border: 1px solid #ccc; border-right: 2px solid #000; background: #fafafa; box-sizing: border-box; }
.hscroll { flex: 0 1 490px; min-width: 0; display: flex; background: #ececec; }
.hscroll button { width: 19px; height: 16px; }
.hscroll .thumb { width: 90%; height: 16px; background: linear-gradient(#f3f3f3, #dcdce0 50%, #c6c6ca 55%, #d4d4d8); }
.status { height: 4px; flex: none; background: #f0f0f0; border-top: 1px solid #dcdcdc; box-sizing: border-box; }
</style>
